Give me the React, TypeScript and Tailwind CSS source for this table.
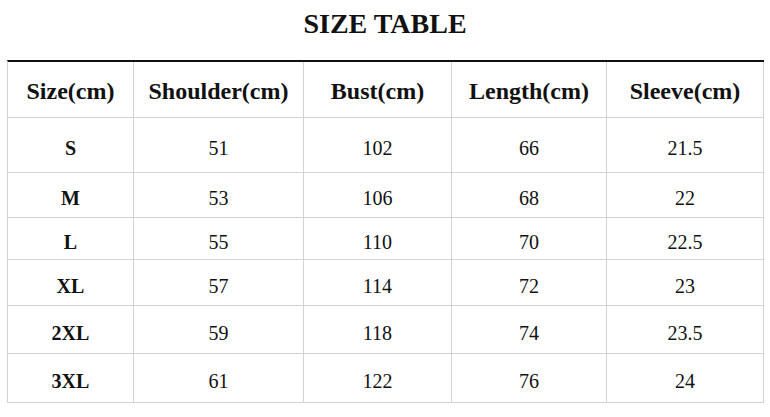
import React from "react";

const columns = ["Size(cm)", "Shoulder(cm)", "Bust(cm)", "Length(cm)", "Sleeve(cm)"];

const widths = ["w-[126px]", "w-[170px]", "w-[148px]", "w-[155px]", "w-[157px]"];

const rows = [
  { h: "h-[55px]", cells: ["S", "51", "102", "66", "21.5"] },
  { h: "h-[45px]", cells: ["M", "53", "106", "68", "22"] },
  { h: "h-[42px]", cells: ["L", "55", "110", "70", "22.5"] },
  { h: "h-[46px]", cells: ["XL", "57", "114", "72", "23"] },
  { h: "h-[48px]", cells: ["2XL", "59", "118", "74", "23.5"] },
  { h: "h-[49px]", cells: ["3XL", "61", "122", "76", "24"] },
];

export default function App() {
  return (
    <div className="h-[417px] w-[770px] bg-white text-[#111] font-['Liberation_Serif',serif]">
      <div className="flex h-[60px] items-center justify-center pb-[12px]">
        <h1 className="text-[28px] font-bold leading-none">SIZE TABLE</h1>
      </div>

      <div className="ml-[7px] w-[757px] border-l border-t-2 border-l-[#d2d2d2] border-t-[#111]">
        <div className="flex h-[56px]">
          {columns.map((c, i) => (
            <div
              key={c}
              className={`${widths[i]} flex items-center justify-center border-b border-r border-[#d2d2d2] pt-[3px] text-[24px] font-bold`}
            >
              {c}
            </div>
          ))}
        </div>

        {rows.map((r) => (
          <div key={r.cells[0]} className={`flex ${r.h}`}>
            {r.cells.map((c, i) => (
              <div
                key={i}
                className={`${widths[i]} flex items-center justify-center border-b border-r border-[#d2d2d2] pt-[6px] text-[20px] ${
                  i === 0 ? "font-bold" : ""
                }`}
              >
                {c}
              </div>
            ))}
          </div>
        ))}
      </div>
    </div>
  );
}
